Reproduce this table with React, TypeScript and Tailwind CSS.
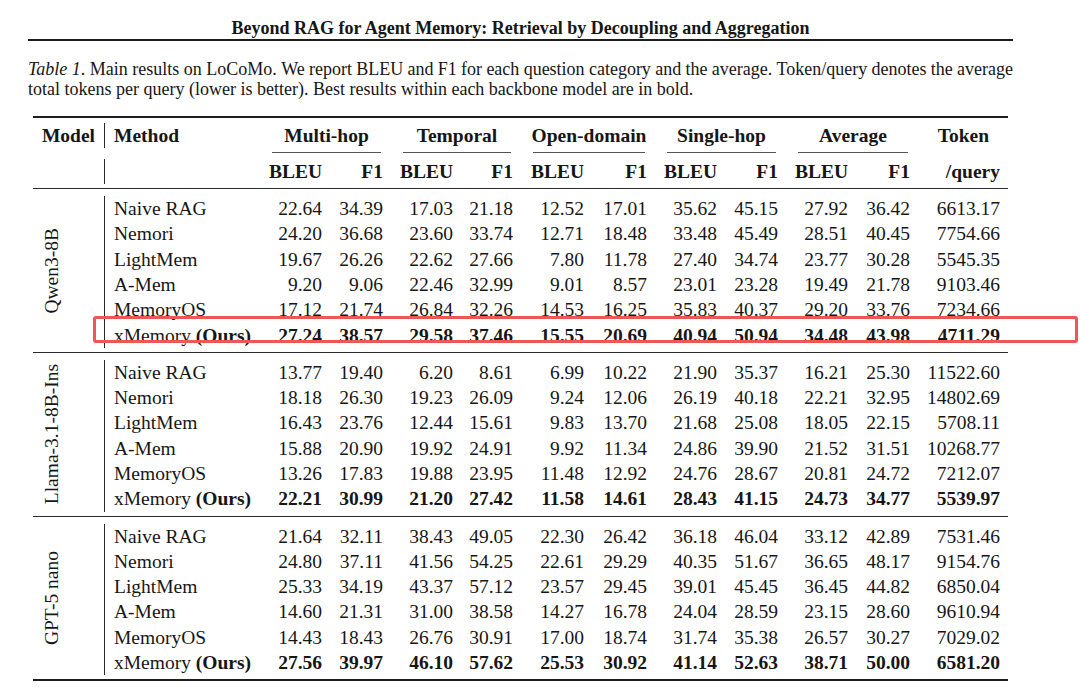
type Row = { method: string; vals: string[]; ours?: boolean };
type Group = { model: string; rows: Row[] };

const groups: Group[] = [
  {
    model: "Qwen3-8B",
    rows: [
      { method: "Naive RAG", vals: ["22.64", "34.39", "17.03", "21.18", "12.52", "17.01", "35.62", "45.15", "27.92", "36.42", "6613.17"] },
      { method: "Nemori", vals: ["24.20", "36.68", "23.60", "33.74", "12.71", "18.48", "33.48", "45.49", "28.51", "40.45", "7754.66"] },
      { method: "LightMem", vals: ["19.67", "26.26", "22.62", "27.66", "7.80", "11.78", "27.40", "34.74", "23.77", "30.28", "5545.35"] },
      { method: "A-Mem", vals: ["9.20", "9.06", "22.46", "32.99", "9.01", "8.57", "23.01", "23.28", "19.49", "21.78", "9103.46"] },
      { method: "MemoryOS", vals: ["17.12", "21.74", "26.84", "32.26", "14.53", "16.25", "35.83", "40.37", "29.20", "33.76", "7234.66"] },
      { method: "xMemory", ours: true, vals: ["27.24", "38.57", "29.58", "37.46", "15.55", "20.69", "40.94", "50.94", "34.48", "43.98", "4711.29"] },
    ],
  },
  {
    model: "Llama-3.1-8B-Ins",
    rows: [
      { method: "Naive RAG", vals: ["13.77", "19.40", "6.20", "8.61", "6.99", "10.22", "21.90", "35.37", "16.21", "25.30", "11522.60"] },
      { method: "Nemori", vals: ["18.18", "26.30", "19.23", "26.09", "9.24", "12.06", "26.19", "40.18", "22.21", "32.95", "14802.69"] },
      { method: "LightMem", vals: ["16.43", "23.76", "12.44", "15.61", "9.83", "13.70", "21.68", "25.08", "18.05", "22.15", "5708.11"] },
      { method: "A-Mem", vals: ["15.88", "20.90", "19.92", "24.91", "9.92", "11.34", "24.86", "39.90", "21.52", "31.51", "10268.77"] },
      { method: "MemoryOS", vals: ["13.26", "17.83", "19.88", "23.95", "11.48", "12.92", "24.76", "28.67", "20.81", "24.72", "7212.07"] },
      { method: "xMemory", ours: true, vals: ["22.21", "30.99", "21.20", "27.42", "11.58", "14.61", "28.43", "41.15", "24.73", "34.77", "5539.97"] },
    ],
  },
  {
    model: "GPT-5 nano",
    rows: [
      { method: "Naive RAG", vals: ["21.64", "32.11", "38.43", "49.05", "22.30", "26.42", "36.18", "46.04", "33.12", "42.89", "7531.46"] },
      { method: "Nemori", vals: ["24.80", "37.11", "41.56", "54.25", "22.61", "29.29", "40.35", "51.67", "36.65", "48.17", "9154.76"] },
      { method: "LightMem", vals: ["25.33", "34.19", "43.37", "57.12", "23.57", "29.45", "39.01", "45.45", "36.45", "44.82", "6850.04"] },
      { method: "A-Mem", vals: ["14.60", "21.31", "31.00", "38.58", "14.27", "16.78", "24.04", "28.59", "23.15", "28.60", "9610.94"] },
      { method: "MemoryOS", vals: ["14.43", "18.43", "26.76", "30.91", "17.00", "18.74", "31.74", "35.38", "26.57", "30.27", "7029.02"] },
      { method: "xMemory", ours: true, vals: ["27.56", "39.97", "46.10", "57.62", "25.53", "30.92", "41.14", "52.63", "38.71", "50.00", "6581.20"] },
    ],
  },
];

// widths of the number columns, BLEU/F1 pairs then token
const colWidths = ["w-[70px]", "w-[61px]", "w-[70px]", "w-[60px]", "w-[71px]", "w-[63px]", "w-[70px]", "w-[61px]", "w-[70px]", "w-[62px]", "w-[90px]"];

const categories = [
  { name: "Multi-hop", w: "w-[131px]" },
  { name: "Temporal", w: "w-[130px]" },
  { name: "Open-domain", w: "w-[134px]" },
  { name: "Single-hop", w: "w-[131px]" },
  { name: "Average", w: "w-[132px]" },
];

function DataRow({ row, highlight }: { row: Row; highlight?: boolean }) {
  return (
    <div className="relative flex h-[25.3px]">
      <div className="w-[148px] border-l border-[#2a2a2a] pl-[9px] flex items-center whitespace-nowrap">
        {row.ours ? (
          <span>
            xMemory <b>(Ours)</b>
          </span>
        ) : (
          row.method
        )}
      </div>
      {row.vals.map((v, i) => (
        <div
          key={i}
          className={`${colWidths[i]} flex items-center justify-end ${row.ours ? "font-bold" : ""}`}
        >
          {v}
        </div>
      ))}
      {highlight && (
        <div className="absolute left-[-11px] top-[-6px] w-[985px] h-[27px] border-[3px] border-[#f25555] rounded-[3px]" />
      )}
    </div>
  );
}

export default function App() {
  return (
    <div className="w-[1080px] h-[693px] bg-white overflow-hidden font-['Liberation_Serif',serif] text-[#161616]">
      <div className="mx-[28px] w-[985px] pt-[17px]">
        <div className="h-[24px] text-center text-[18px] leading-[22px] font-bold border-b-2 border-[#1e1e1e]">
          Beyond RAG for Agent Memory: Retrieval by Decoupling and Aggregation
        </div>

        <div className="mt-[18px] text-[18px] leading-[20px]">
          <div className="whitespace-nowrap flex justify-between">
            <span>
              <i>Table 1</i>. Main results on LoCoMo.
            </span>
            <span>We</span>
            <span>report</span>
            <span>BLEU</span>
            <span>and</span>
            <span>F1</span>
            <span>for</span>
            <span>each</span>
            <span>question</span>
            <span>category</span>
            <span>and</span>
            <span>the</span>
            <span>average.</span>
            <span>Token/query</span>
            <span>denotes</span>
            <span>the</span>
            <span>average</span>
          </div>
          <div>
            total tokens per query (lower is better). Best results within each backbone model are in bold.
          </div>
        </div>

        <div className="mx-[5px] mt-[17px] w-[975px] text-[19.5px] border-t-2 border-b-2 border-[#1e1e1e]">
          {/* header row 1 */}
          <div className="flex h-[35px] font-bold">
            <div className="w-[71px] pt-[5px]">
              <div className="h-[25px] flex items-center justify-end pr-[9px]">Model</div>
            </div>
            <div className="w-[148px] pt-[5px]">
              <div className="h-[25px] border-l border-[#2a2a2a] pl-[9px] flex items-center">Method</div>
            </div>
            {categories.map((c) => (
              <div key={c.name} className={`${c.w} flex flex-col pt-[5px]`}>
                <div className="h-[25px] ml-5 mr-[2px] flex items-center justify-center whitespace-nowrap">{c.name}</div>
                <div className="mt-auto ml-5 mr-[2px] h-px bg-[#555]" />
              </div>
            ))}
            <div className="w-[90px] pt-[5px]">
              <div className="h-[25px] flex items-center justify-end pr-[11px]">Token</div>
            </div>
          </div>

          {/* header row 2 */}
          <div className="flex h-[36px] pt-[6px] font-bold border-b border-[#2a2a2a]">
            <div className="w-[71px]" />
            <div className="w-[148px] h-[25px] border-l border-[#2a2a2a]" />
            {colWidths.slice(0, 10).map((w, i) => (
              <div key={i} className={`${w} h-[25px] flex items-center justify-end`}>
                {i % 2 === 0 ? "BLEU" : "F1"}
              </div>
            ))}
            <div className="w-[90px] h-[25px] flex items-center justify-end">/query</div>
          </div>

          {groups.map((g, gi) => (
            <div key={g.model} className={`flex ${gi > 0 ? "border-t border-[#2a2a2a]" : ""}`}>
              <div className="w-[71px] flex items-center justify-center pr-[33px]">
                <span className="[writing-mode:vertical-rl] rotate-180 whitespace-nowrap">{g.model}</span>
              </div>
              <div className="pt-[7px] pb-[4px]">
                {g.rows.map((r) => (
                  <DataRow key={r.method} row={r} highlight={gi === 0 && !!r.ours} />
                ))}
              </div>
            </div>
          ))}
        </div>
      </div>
    </div>
  );
}
